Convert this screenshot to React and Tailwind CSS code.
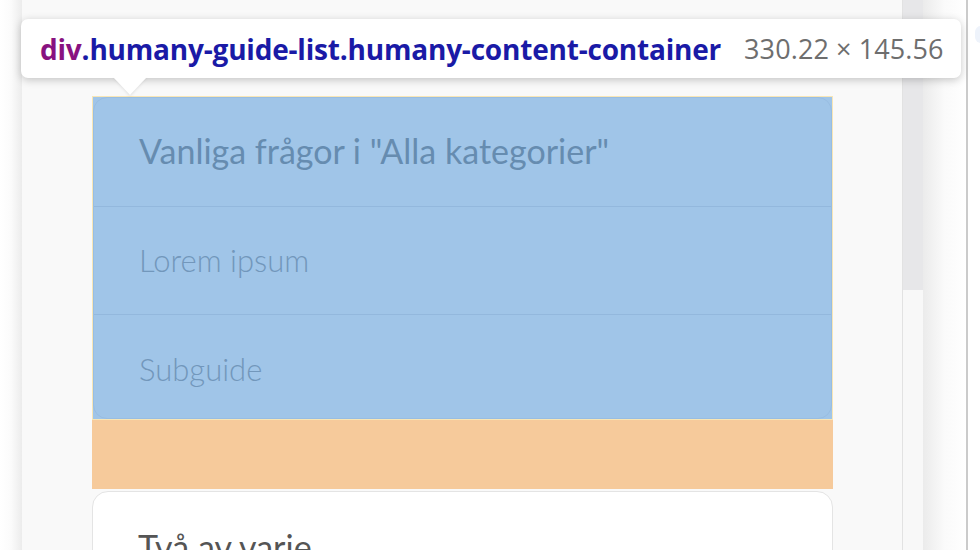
export default function App() {
  return (
    <div className="relative flex h-[550px] w-[980px] overflow-hidden bg-white" style={{ fontFamily: "Lato, 'Open Sans', sans-serif" }}>
      {/* left strip */}
      <div className="h-full w-[22px] shrink-0 bg-gradient-to-r from-white via-[#fbfbfb] to-[#ececec]" />
      {/* main panel */}
      <div className="flex h-full w-[880px] shrink-0 flex-col bg-[#f9f9f9] pl-[70px] pr-[69px] pt-[96px]">
        <div className="shrink-0 border border-[#f8e6b6] bg-[#a0c5e8]">
          <div className="rounded-[14px] border border-[#98bde2]">
            <div className="flex h-[109px] items-center border-b border-[#93b8dd] pb-[4px] pl-[45px] text-[34px] text-[#668cb0]">
              Vanliga frågor i "Alla kategorier"
            </div>
            <div className="flex h-[108px] items-center border-b border-[#93b8dd] pl-[45px] text-[31px] font-light text-[#7297bb]">
              Lorem ipsum
            </div>
            <div className="flex h-[103px] items-center pl-[45px] pt-[5px] text-[31px] font-light text-[#7297bb]">
              Subguide
            </div>
          </div>
        </div>
        <div className="h-[69px] shrink-0 bg-[#f6ca9b]" />
        <div className="mt-[2px] h-[100px] shrink-0 rounded-t-[16px] border border-[#e4e4e4] bg-white pl-[45px] pt-[35px] text-[34px] leading-[40px] text-[#555555]">
          Två av varje
        </div>
      </div>
      {/* scrollbar */}
      <div className="flex h-full w-[21px] shrink-0 flex-col border-l border-[#e2e2e2]">
        <div className="h-[290px] bg-[#e7e7e9]" />
        <div className="flex-1 bg-[#f8f8f8]" />
      </div>
      {/* shadow area */}
      <div className="h-full w-[43px] shrink-0 bg-gradient-to-r from-[#ebebeb] via-[#fafafa] to-white" />
      <div className="h-full w-[2px] shrink-0 bg-[#cbcbcb]" />
      <div className="relative h-full flex-1 bg-white">
        <div className="absolute left-[7px] top-[26px] h-[17px] w-[20px] rounded-[6px] bg-[#eef3fb]" />
      </div>

      {/* devtools tooltip */}
      <div className="absolute left-[21px] top-[19px] flex h-[59px] w-[940px] items-center rounded-[7px] bg-white pl-[19px] shadow-[0_2px_8px_rgba(0,0,0,0.22)]" style={{ fontFamily: "'Open Sans', 'Noto Sans', sans-serif" }}>
        <span className="text-[28px] font-bold leading-[36px] tracking-[-0.2px]">
          <span className="text-[#881280]">div</span>
          <span className="text-[#1a1aa6]">.humany-guide-list.humany-content-container</span>
        </span>
        <span className="ml-[23px] text-[27px] leading-[36px] tracking-[0.1px] text-[#6e6e6e]">330.22 × 145.56</span>
      </div>
      <svg className="absolute left-[111px] top-[77px]" width="38" height="22" viewBox="0 0 38 22">
        <defs>
          <filter id="s" x="-50%" y="-50%" width="200%" height="200%">
            <feGaussianBlur stdDeviation="1.5" />
          </filter>
        </defs>
        <polygon points="3,1 35,1 19,19" fill="rgba(0,0,0,0.12)" filter="url(#s)" />
        <polygon points="2,0 36,0 19,18" fill="#ffffff" />
      </svg>
    </div>
  );
}
